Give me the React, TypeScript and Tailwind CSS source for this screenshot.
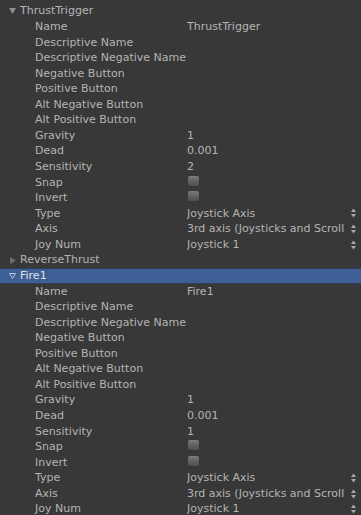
import React from "react";

type Field =
  | { label: string; kind: "text"; value?: string }
  | { label: string; kind: "check" }
  | { label: string; kind: "popup"; value: string };

const fields = (name: string, sens: string): Field[] => [
  { label: "Name", kind: "text", value: name },
  { label: "Descriptive Name", kind: "text" },
  { label: "Descriptive Negative Name", kind: "text" },
  { label: "Negative Button", kind: "text" },
  { label: "Positive Button", kind: "text" },
  { label: "Alt Negative Button", kind: "text" },
  { label: "Alt Positive Button", kind: "text" },
  { label: "Gravity", kind: "text", value: "1" },
  { label: "Dead", kind: "text", value: "0.001" },
  { label: "Sensitivity", kind: "text", value: sens },
  { label: "Snap", kind: "check" },
  { label: "Invert", kind: "check" },
  { label: "Type", kind: "popup", value: "Joystick Axis" },
  { label: "Axis", kind: "popup", value: "3rd axis (Joysticks and Scroll" },
  { label: "Joy Num", kind: "popup", value: "Joystick 1" },
];

const sections = [
  { name: "ThrustTrigger", expanded: true, selected: false, sens: "2" },
  { name: "ReverseThrust", expanded: false, selected: false, sens: "1" },
  { name: "Fire1", expanded: true, selected: true, sens: "1" },
];

function Arrows() {
  return (
    <svg width="5" height="10" viewBox="0 0 5 10" className="shrink-0">
      <path d="M0 4 L2.5 0.5 L5 4 Z" fill="#a8a8a8" />
      <path d="M0 6 L2.5 9.5 L5 6 Z" fill="#a8a8a8" />
    </svg>
  );
}

function Checkbox() {
  return (
    <div className="w-[11px] h-[10px] shrink-0 mt-[-3px] rounded-[2px] bg-gradient-to-b from-[#7c7c7c] via-[#626262] to-[#4e4e4e]" />
  );
}

function FieldRow({ f }: { f: Field }) {
  return (
    <div className="flex h-[15.57px] items-center leading-[15.57px] whitespace-nowrap">
      <div className="w-[187px] pl-[35px] overflow-hidden shrink-0">{f.label}</div>
      {f.kind === "text" && <div className="flex-1 overflow-hidden">{f.value ?? ""}</div>}
      {f.kind === "check" && (
        <div className="flex-1 flex items-center pl-[1px]">
          <Checkbox />
        </div>
      )}
      {f.kind === "popup" && (
        <div className="flex-1 flex items-center pr-[5px]">
          <div className="flex-1 overflow-hidden">{f.value}</div>
          <Arrows />
        </div>
      )}
    </div>
  );
}

function Header({ name, expanded, selected }: { name: string; expanded: boolean; selected: boolean }) {
  return (
    <div
      className={
        "flex h-[15.57px] items-center leading-[15.57px] whitespace-nowrap " +
        (selected ? "bg-[#3d5f95] text-[#e2e2e2] shadow-[inset_0_1px_0_#2e3f5a,inset_0_-1px_0_#2e3f5a]" : "")
      }
    >
      <div className="w-[20px] shrink-0 flex items-center pl-[9px]">
        {expanded ? (
          selected ? (
            <svg width="7" height="6" viewBox="0 0 7 6">
              <path d="M0.5 0.5 L6.5 0.5 L3.5 5.5 Z" fill="none" stroke="#b9c6dc" strokeWidth="1" />
            </svg>
          ) : (
            <svg width="7" height="6" viewBox="0 0 7 6">
              <path d="M0 0 L7 0 L3.5 6 Z" fill="#8e8e8e" />
            </svg>
          )
        ) : (
          <svg width="6" height="7" viewBox="0 0 6 7" className="ml-[1px]">
            <path d="M0 0 L6 3.5 L0 7 Z" fill="#6f6f6f" />
          </svg>
        )}
      </div>
      <div>{name}</div>
    </div>
  );
}

export default function App() {
  return (
    <div
      className="w-[361px] h-[515px] overflow-hidden bg-[#383838] text-[#b4b4b4] text-[11px] pt-[3.4px]"
      style={{ fontFamily: '"DejaVu Sans", Verdana, sans-serif' }}
    >
      {sections.map((s) => (
        <div key={s.name}>
          <Header name={s.name} expanded={s.expanded} selected={s.selected} />
          {s.expanded && fields(s.name, s.sens).map((f) => <FieldRow key={f.label} f={f} />)}
        </div>
      ))}
    </div>
  );
}
